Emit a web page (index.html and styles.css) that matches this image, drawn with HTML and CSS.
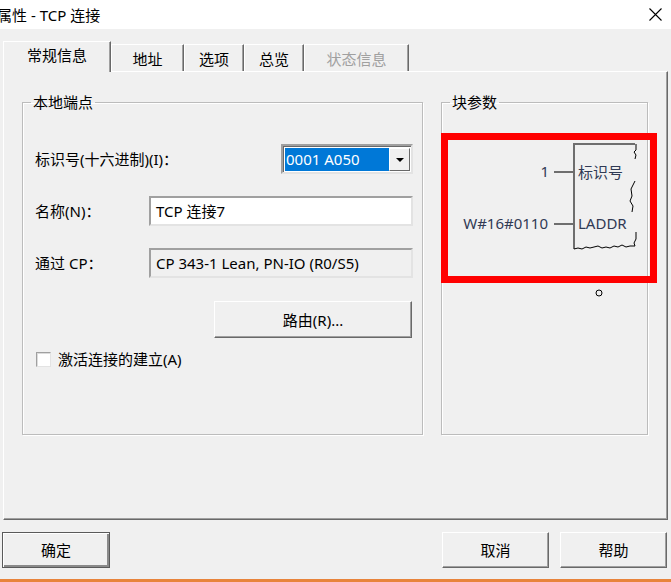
FILE: index.html
```html
<!DOCTYPE html>
<html lang="zh">
<head>
  <meta charset="UTF-8" />
  <title>属性 - TCP 连接</title>
  <link rel="stylesheet" href="styles.css">
</head>
<body>
  <div class="titlebar">
    <span class="title">属性 - TCP 连接</span>
    <svg class="close" width="13" height="13" viewBox="0 0 13 13">
      <path d="M0.5 0.5 L12.5 12.5 M12.5 0.5 L0.5 12.5" stroke="#000" stroke-width="1.1" fill="none"/>
    </svg>
  </div>

  <div class="tabs">
    <div class="tab active">常规信息</div>
    <div class="tab w-addr">地址</div>
    <div class="tab w-small">选项</div>
    <div class="tab w-small">总览</div>
    <div class="tab w-status disabled">状态信息</div>
  </div>

  <div class="panel">
    <fieldset class="group group-left">
      <legend>本地端点</legend>
      <div class="group-body">
        <div class="field">
          <span>标识号(十六进制)(I)：</span>
          <div class="combo">
            <span class="combo-value">0001 A050</span>
            <span class="combo-btn">
              <svg width="8" height="4" viewBox="0 0 8 4"><path d="M0 0 H8 L4 4 Z" fill="#000"/></svg>
            </span>
          </div>
        </div>
        <div class="field">
          <span>名称(N)：</span>
          <div class="input">TCP 连接7</div>
        </div>
        <div class="field">
          <span>通过 CP：</span>
          <div class="input readonly">CP 343-1 Lean, PN-IO (R0/S5)</div>
        </div>
        <div class="field field-btn">
          <button class="btn route">路由(R)...</button>
        </div>
        <label class="check">
          <span class="box"></span>
          <span>激活连接的建立(A)</span>
        </label>
      </div>
    </fieldset>

    <fieldset class="group group-right">
      <legend>块参数</legend>
      <svg class="block" width="205" height="200" viewBox="0 0 205 200">
        <g fill="none" stroke="#6e6e6e" stroke-width="2">
          <path d="M112 60 H132 M112 112 H132"/>
          <path d="M193 32 H132 V137"/>
        </g>
        <g fill="none" stroke="#000" stroke-width="1">
          <path d="M194 32 L194 38 L192 40 L194 43 L193 47"/>
          <path d="M193 69 L191 73 L189 77 L190 84 L188 89 L191 94 L190 100"/>
          <path d="M194 120 L194 127 L192 131 L193 134"/>
          <path d="M132 137 L136 136 L140 137 L144 135 L148 136 L152 135 L156 134 L160 136 L164 135 L168 136 L172 134 L176 135 L180 133 L184 135 L188 134 L193 134"/>
          <circle cx="157" cy="181" r="3"/>
        </g>
        <g class="pin-text">
          <text x="107" y="65" text-anchor="end">1</text>
          <text x="136" y="66">标识号</text>
          <text x="106" y="117" text-anchor="end">W#16#0110</text>
          <text x="136" y="117">LADDR</text>
        </g>
      </svg>
      <div class="highlight"></div>
    </fieldset>
  </div>

  <div class="footer">
    <button class="btn default">确定</button>
    <div class="footer-right">
      <button class="btn">取消</button>
      <button class="btn">帮助</button>
    </div>
  </div>

  <div class="taskbar"></div>
</body>
</html>
```

FILE: styles.css
```css
html, body {
  margin: 0;
  padding: 0;
}

body {
  width: 671px;
  height: 582px;
  overflow: hidden;
  background: #f0f0f0;
  font-family: "Noto Sans", "Noto Sans CJK SC", sans-serif;
  font-size: 15px;
  line-height: 20px;
  color: #000;
}

.titlebar {
  height: 29px;
  background: #fff;
  display: flex;
  align-items: center;
  justify-content: space-between;
  padding-right: 9px;
  overflow: hidden;
}

.title {
  margin-left: -3px;
}

.tabs {
  display: flex;
  align-items: flex-end;
  height: 30px;
  margin: 12px 0 0 3px;
}

.tab {
  box-sizing: border-box;
  height: 27px;
  line-height: 28px;
  text-align: center;
  border-top: 1px solid #fff;
  border-left: 1px solid #fff;
  border-right: 1px solid #696969;
  box-shadow: inset -1px 0 #a0a0a0;
}

.tab.active {
  position: relative;
  width: 108px;
  height: 31px;
  margin-bottom: -1px;
  line-height: 27px;
  background: #f0f0f0;
}

.w-addr { width: 73px; }
.w-small { width: 60px; }
.w-status { width: 105px; }

.tab.disabled {
  color: #a0a0a0;
}

.panel {
  box-sizing: border-box;
  width: 665px;
  height: 449px;
  margin-left: 3px;
  padding: 20px 0 0 18px;
  display: flex;
  gap: 18px;
  border-top: 1px solid #fff;
  border-left: 1px solid #fff;
  border-right: 1px solid #696969;
  border-bottom: 1px solid #696969;
  box-shadow: inset -1px -1px #a0a0a0;
}

.group {
  box-sizing: border-box;
  position: relative;
  height: 343px;
  margin: 0;
  padding: 0;
  border: 1px solid #bcbcbc;
  box-shadow: 1px 1px 0 #fff, inset 1px 1px 0 #fff;
}

.group legend {
  margin-left: 8px;
  padding: 0 2px;
  line-height: 20px;
}

.group-left { width: 401px; }
.group-right { width: 207px; }

.group-body {
  display: flex;
  flex-direction: column;
  gap: 22px;
  padding: 32px 9px 0 12px;
}

.field {
  display: flex;
  align-items: center;
  justify-content: space-between;
  height: 30px;
}

.field-btn {
  justify-content: flex-end;
  height: 37px;
  margin-top: 1px;
}

.combo {
  box-sizing: border-box;
  display: flex;
  width: 132px;
  height: 30px;
  padding: 1px;
  background: #fff;
  border: 2px solid;
  border-color: #a0a0a0 #e3e3e3 #e3e3e3 #a0a0a0;
  box-shadow: inset 1px 1px 0 #696969;
}

.combo-value {
  flex: 1;
  margin: 1px 0 0 1px;
  padding-left: 1px;
  background: #0078d7;
  color: #fff;
  line-height: 22px;
}

.combo-btn {
  box-sizing: border-box;
  width: 21px;
  display: flex;
  align-items: center;
  justify-content: center;
  margin-top: 1px;
  background: #f0f0f0;
  border-top: 1px solid #fff;
  border-left: 1px solid #fff;
  border-right: 1px solid #696969;
  border-bottom: 1px solid #696969;
}

.input {
  box-sizing: border-box;
  width: 264px;
  height: 30px;
  padding: 3px 0 0 5px;
  background: #fff;
  border: 2px solid;
  border-color: #a0a0a0 #e3e3e3 #e3e3e3 #a0a0a0;
}

.input.readonly {
  background: #f0f0f0;
}

.btn {
  box-sizing: border-box;
  height: 36px;
  background: #f0f0f0;
  font: inherit;
  color: #000;
  border-top: 1px solid #fff;
  border-left: 1px solid #fff;
  border-right: 1px solid #696969;
  border-bottom: 1px solid #696969;
  box-shadow: inset -1px -1px #a0a0a0;
  padding: 0;
}

.route {
  width: 198px;
  height: 37px;
  margin-right: 1px;
}

.check {
  display: flex;
  align-items: center;
  gap: 7px;
  margin-top: -11px;
  padding-left: 1px;
}

.check .box {
  box-sizing: border-box;
  width: 15px;
  height: 15px;
  background: #fff;
  border: 1px solid;
  border-color: #a0a0a0 #e3e3e3 #e3e3e3 #a0a0a0;
  box-shadow: inset 1px 1px 0 #dcdcdc;
}

.block {
  display: block;
}

.pin-text {
  font-family: "Noto Sans", "Noto Sans CJK SC", sans-serif;
  font-size: 15px;
  fill: #303a55;
}

/* red annotation frame drawn on top of the block picture */
.highlight {
  position: absolute;
  left: -1px;
  top: 21px;
  width: 216px;
  height: 150px;
  box-sizing: border-box;
  border: 7px solid #ff0000;
}

.footer {
  display: flex;
  justify-content: space-between;
  margin-top: 12px;
  padding: 0 4px 0 2px;
}

.footer .btn {
  width: 107px;
}

.footer .default {
  width: 108px;
  border: 1px solid #5a5a5a;
  box-shadow: inset 1px 1px #fff, inset -2px -2px #8a8a8a;
}

.footer-right {
  display: flex;
  gap: 11px;
}

.taskbar {
  margin-top: 11px;
  height: 3px;
  background: #e8843c;
}
```
